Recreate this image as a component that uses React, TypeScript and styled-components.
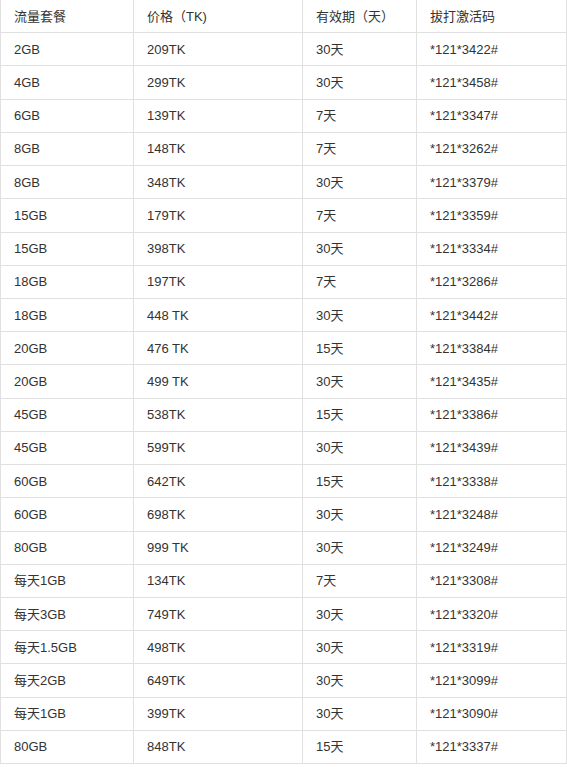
import React from "react";
import styled, { createGlobalStyle } from "styled-components";

const Global = createGlobalStyle`
  html, body { margin: 0; padding: 0; background: #fff; }
  body { font-family: "Liberation Sans", "Noto Sans CJK SC", Arial, sans-serif; }
`;

const Table = styled.div`
  display: grid;
  grid-template-columns: 133px 169px 114px 150px;
  grid-auto-rows: 33.22px;
  width: 567px;
  box-sizing: border-box;
  border-left: 1px solid #e0e0e0;
  font-size: 13px;
  line-height: 16px;
  color: #333;
`;

const Cell = styled.div<{ $head?: boolean }>`
  display: flex;
  align-items: center;
  box-sizing: border-box;
  padding: 1px 0 0 13px;
  border-right: 1px solid #e0e0e0;
  border-bottom: 1px solid #e0e0e0;
  white-space: nowrap;
  color: ${(p) => (p.$head ? "#333" : "#333")};
`;

const Text = styled.span`
  display: block;
  height: 16px;
  line-height: 16px;
`;

const head = ["流量套餐", "价格（TK)", "有效期（天）", "拔打激活码"];

const rows: [string, string, string, string][] = [
  ["2GB", "209TK", "30天", "*121*3422#"],
  ["4GB", "299TK", "30天", "*121*3458#"],
  ["6GB", "139TK", "7天", "*121*3347#"],
  ["8GB", "148TK", "7天", "*121*3262#"],
  ["8GB", "348TK", "30天", "*121*3379#"],
  ["15GB", "179TK", "7天", "*121*3359#"],
  ["15GB", "398TK", "30天", "*121*3334#"],
  ["18GB", "197TK", "7天", "*121*3286#"],
  ["18GB", "448 TK", "30天", "*121*3442#"],
  ["20GB", "476 TK", "15天", "*121*3384#"],
  ["20GB", "499 TK", "30天", "*121*3435#"],
  ["45GB", "538TK", "15天", "*121*3386#"],
  ["45GB", "599TK", "30天", "*121*3439#"],
  ["60GB", "642TK", "15天", "*121*3338#"],
  ["60GB", "698TK", "30天", "*121*3248#"],
  ["80GB", "999 TK", "30天", "*121*3249#"],
  ["每天1GB", "134TK", "7天", "*121*3308#"],
  ["每天3GB", "749TK", "30天", "*121*3320#"],
  ["每天1.5GB", "498TK", "30天", "*121*3319#"],
  ["每天2GB", "649TK", "30天", "*121*3099#"],
  ["每天1GB", "399TK", "30天", "*121*3090#"],
  ["80GB", "848TK", "15天", "*121*3337#"],
];

export default function App() {
  return (
    <>
      <Global />
      <Table>
        {head.map((h, i) => (
          <Cell key={"h" + i} $head>
            <Text>{h}</Text>
          </Cell>
        ))}
        {rows.map((r, ri) =>
          r.map((c, ci) => (
            <Cell key={ri + "-" + ci}>
              <Text>{c}</Text>
            </Cell>
          ))
        )}
      </Table>
    </>
  );
}
